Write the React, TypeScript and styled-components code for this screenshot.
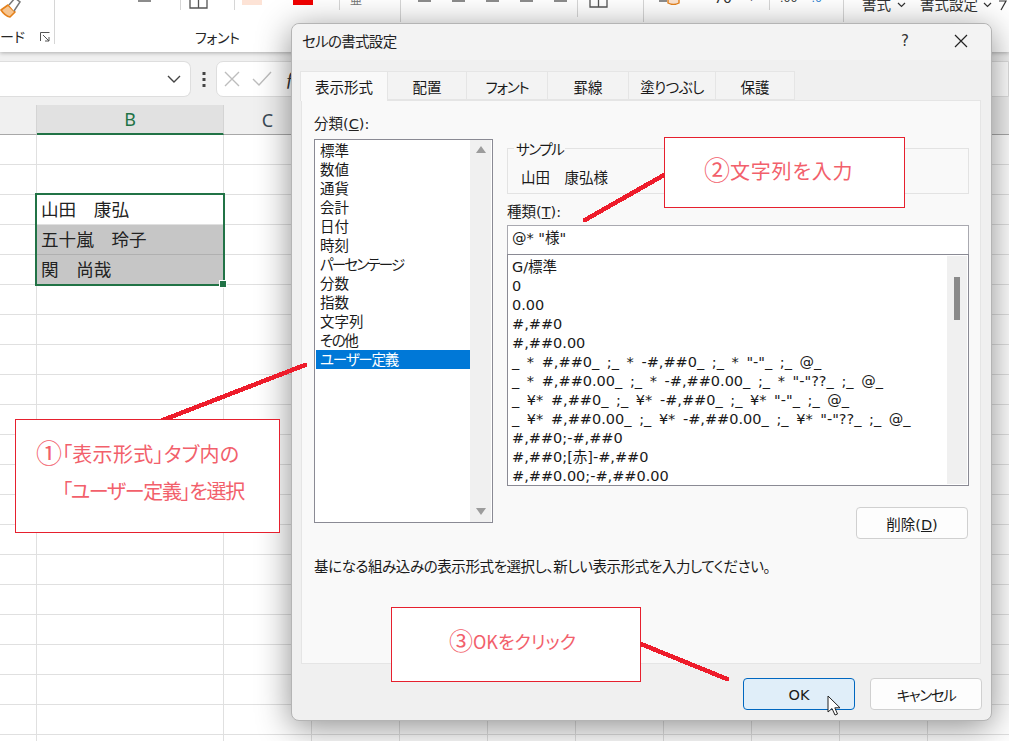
import React from "react";
import styled, { createGlobalStyle } from "styled-components";

const Global = createGlobalStyle`
  html, body { margin: 0; padding: 0; background: #fff; }
  body { font-family: "DejaVu Sans", "Noto Sans CJK JP", sans-serif; font-size: 14.5px; color: #1a1a1a; font-feature-settings: "palt"; }
  * { box-sizing: border-box; }
`;

const Page = styled.div`
  position: relative; width: 1009px; height: 741px; overflow: hidden; background: #fff;
`;

/* ---------- ribbon ---------- */
const Ribbon = styled.header`
  position: relative; z-index: 2; height: 52px; background: #fff;
  box-shadow: 0 1px 4px rgba(0,0,0,.28);
`;
const Strip = styled.div`display: flex; height: 30px; overflow: hidden;`;
const Slot = styled.div<{ $w: number; $h: number; $pad?: number; $gap?: number; $last?: boolean }>`
  flex: none; display: flex; align-items: flex-start; overflow: hidden;
  width: ${p => p.$w}px; height: ${p => p.$h}px;
  padding-left: ${p => p.$pad ?? 0}px; gap: ${p => p.$gap ?? 0}px;
  border-right: ${p => (p.$last ? "0" : "1px solid #d6d6d6")};
`;
const Dash = styled.i<{ $w?: number }>`display: block; flex: none; width: ${p => p.$w ?? 13}px; height: 2px; background: #8c8c8c;`;
const Swatch = styled.i<{ $c: string; $ml: number }>`
  display: block; flex: none; width: 20px; height: 5px; background: ${p => p.$c}; margin-left: ${p => p.$ml}px;
`;
const Clipped = styled.span<{ $top: number; $size: number; $c?: string; $ml?: number }>`
  flex: none; line-height: 20px; margin-top: ${p => p.$top}px; font-size: ${p => p.$size}px;
  color: ${p => p.$c ?? "#333"}; margin-left: ${p => p.$ml ?? 0}px;
`;
const LabelRow = styled.div`display: flex; height: 14px; font-size: 14px; line-height: 16px; color: #262626;`;
const ClipboardLabel = styled.div`
  flex: none; width: 55px; display: flex; justify-content: space-between; align-items: center;
  padding-right: 4px; border-right: 1px solid #d6d6d6; overflow: visible; white-space: nowrap;
`;
const FontLabel = styled.div`margin-left: 140px; white-space: nowrap; width: 60px; letter-spacing: -.3px;`;

/* ---------- formula bar ---------- */
const FormulaBar = styled.div`
  display: flex; align-items: center; height: 53px; padding-top: 1px; background: #f0f0f0;
`;
const NameBox = styled.div`
  width: 191px; height: 36px; background: #fff; border: 1px solid #dedede; border-left: 0;
  border-radius: 0 7px 7px 0; display: flex; align-items: center; justify-content: flex-end; padding-right: 9px;
`;
const DotsWrap = styled.div`width: 25px; display: flex; justify-content: center;`;
const FormulaBox = styled.div`
  flex: 1; height: 36px; background: #fff; border: 1px solid #dedede; border-radius: 7px 0 0 7px;
  display: flex; align-items: center; padding-left: 7px; gap: 12px;
`;
const Fx = styled.span`font: italic 20px "Liberation Serif", serif; color: #333; margin-left: 1px;`;

/* ---------- sheet ---------- */
const Columns = "37px 187px repeat(10, 88px)";
const HeaderRow = styled.div`
  display: grid; grid-template-columns: ${Columns}; height: 30px; background: #f0f0f0;
`;
const ColHead = styled.div<{ $active?: boolean }>`
  display: flex; align-items: center; justify-content: center; font-family: "Noto Sans", sans-serif; font-size: 18px;
  border-right: 1px solid #d4d4d4;
  background: ${p => (p.$active ? "#e1e1e1" : "transparent")};
  color: ${p => (p.$active ? "#217346" : "#3a4a55")};
  border-bottom: ${p => (p.$active ? "2px solid #217346" : "1px solid #a8a8a8")};
`;
const SheetGrid = styled.div`
  position: relative; display: grid; grid-template-columns: ${Columns}; grid-auto-rows: 30px;
`;
const Cell = styled.div<{ $fill?: boolean }>`
  border-right: 1px solid #e0e0e0; border-bottom: 1px solid #e0e0e0;
  background: ${p => (p.$fill ? "#c6c6c6" : "#fff")};
  border-color: ${p => (p.$fill ? "#b0b0b0" : "#e0e0e0")};
  font-family: "Noto Sans CJK JP", sans-serif;
  font-size: 17.6px; line-height: 27px; padding-left: 4px; white-space: pre; color: #222;
  font-feature-settings: normal;
`;
const Selection = styled.div`
  position: absolute; left: 35px; top: 58px; width: 190px; height: 93px; border: 2px solid #217346;
  pointer-events: none;
  &::after {
    content: ""; position: absolute; right: -3px; bottom: -3px; width: 6px; height: 6px;
    background: #217346; outline: 1px solid #fff;
  }
`;

/* ---------- dialog ---------- */
const Dialog = styled.section`
  position: absolute; z-index: 3; left: 291px; top: 23px; width: 701px; height: 698px;
  display: flex; flex-direction: column; background: #f0f0f0;
  border: 1px solid #b4b4b4; border-radius: 8px;
  box-shadow: 0 6px 34px rgba(0,0,0,.45);
`;
const TitleBar = styled.div`
  flex: none; height: 36px; display: flex; align-items: center; padding: 0 0 3px 10px;
  background: #f3f3f3; border-radius: 8px 8px 0 0; font-size: 14.5px; color: #222;
`;
const TitleText = styled.div`flex: 1; letter-spacing: -.7px;`;
const HelpMark = styled.span`width: 53px; font-size: 15px; color: #333;`;
const CloseWrap = styled.div`width: 37px; display: flex;`;
const TabRow = styled.div`flex: none; display: flex; margin: 11px 0 0 8px; height: 29px; position: relative; z-index: 1;`;
const Tab = styled.div<{ $w: number; $active?: boolean; $ls?: number }>`
  width: ${p => p.$w}px; height: ${p => (p.$active ? 30 : 29)}px; display: flex; align-items: center; justify-content: center;
  font-size: 14.5px; color: #1a1a1a; padding-top: ${p => (p.$active ? 0 : 1)}px; letter-spacing: ${p => p.$ls ?? 0}px;
  background: ${p => (p.$active ? "#f9f9f9" : "#f3f3f3")};
  border: 1px solid #e5e5e5; border-left-width: ${p => (p.$active ? 1 : 0)}px;
  border-bottom: ${p => (p.$active ? "0" : "1px solid #e5e5e5")};
`;
const Panel = styled.div`
  flex: none; height: 564px; margin: 0 10px 0 9px; padding: 14px 0 0 12px;
  background: #f9f9f9; border: 1px solid #e5e5e5;
`;
const Columns2 = styled.div`display: flex; gap: 14px;`;
const LeftCol = styled.div`flex: none; width: 179px;`;
const RightCol = styled.div`flex: none; width: 462px; padding-top: 33px; display: flex; flex-direction: column;`;
const FieldLabel = styled.div<{ $mt?: number }>`
  height: 18px; line-height: 18px; font-size: 14.5px; color: #222; white-space: nowrap; margin-top: ${p => p.$mt ?? 0}px;
`;
const ListBox = styled.div<{ $h: number }>`
  display: flex; height: ${p => p.$h}px; background: #fff; border: 1px solid #8a8a94; margin-top: 6px;
`;
const Rows = styled.div`flex: 1; padding: 1px 0 0 1px; overflow: hidden;`;
const Row = styled.div<{ $sel?: boolean; $ls?: number }>`
  height: 19px; line-height: 21px; padding-left: 4px; font-size: 14.5px; white-space: pre; letter-spacing: ${p => p.$ls ?? 0}px;
  background: ${p => (p.$sel ? "#0078d7" : "transparent")};
  color: ${p => (p.$sel ? "#fff" : "#1a1a1a")};
`;
const FormatRow = styled.div`height: 19px; line-height: 21px; font-size: 14.5px; white-space: pre; word-spacing: 3px;`;
const Track = styled.div`
  flex: none; width: 21px; margin: 0 1px 0 0; background: #f0f0f0; display: flex; flex-direction: column;
  justify-content: space-between; align-items: center; padding: 6px 0 7px;
`;
const Arrow = styled.i<{ $down?: boolean }>`
  display: block; width: 0; height: 0; border-left: 5px solid transparent; border-right: 5px solid transparent;
  ${p => (p.$down ? "border-top: 7px solid #9c9c9c;" : "border-bottom: 7px solid #9c9c9c;")}
`;
const SampleGroup = styled.div`
  position: relative; height: 46px; border: 1px solid #e3e3e3; padding: 19px 0 0 13px; font-size: 14.5px; line-height: 20px; white-space: pre;
`;
const Legend = styled.span`
  position: absolute; left: 6px; top: -8px; padding: 0 2px; background: #f9f9f9; line-height: 18px; font-size: 14.5px; letter-spacing: -1.4px;
`;
const FormatInput = styled.div`
  height: 30px; margin-top: 4px; background: #fff; border: 1px solid #a9a9b0; padding-left: 4px; line-height: 25px; font-size: 14.5px; white-space: pre;
`;
const FormatList = styled.div`
  display: flex; height: 232px; margin-top: -1px; background: #fff; border: 1px solid #8a8a94;
`;
const FormatRows = styled.div`flex: 1; padding: 2px 0 0 4px; overflow: hidden;`;
const FormatTrack = styled.div`
  flex: none; width: 20px; margin: 1px 1px 1px 0; background: #f0f0f0; display: flex; justify-content: center; padding-top: 21px;
`;
const Thumb = styled.i`display: block; width: 6px; height: 43px; background: #8a8a8a;`;
const DeleteRow = styled.div`display: flex; justify-content: flex-end; margin-top: 21px; padding-right: 1px;`;
const Btn = styled.button<{ $primary?: boolean; $ls?: number }>`
  position: relative; width: 112px; height: 32px; border-radius: 4px; font: inherit; font-size: 14.5px; color: #1a1a1a; padding: 1px 0 0;
  font-feature-settings: "palt"; letter-spacing: ${p => p.$ls ?? 0}px;
  background: ${p => (p.$primary ? "#e0eef9" : "#fdfdfd")};
  border: 1px solid ${p => (p.$primary ? "#0067c0" : "#d0d0d0")};
`;
const Hint = styled.div`margin-top: 19px; height: 18px; line-height: 18px; font-size: 14.5px; white-space: nowrap; letter-spacing: -.42px;`;
const Footer = styled.div`flex: 1; display: flex; justify-content: flex-end; gap: 15px; padding: 14px 9px 0 0;`;
const Pointer = styled.svg`position: absolute; left: 83px; top: 16px;`;

/* ---------- annotations ---------- */
const Overlay = styled.svg`position: absolute; z-index: 4; left: 0; top: 0; pointer-events: none;`;
const Callout = styled.aside<{ $x: number; $y: number; $w: number; $h: number; $pl: number; $pt: number; $size: number; $ls?: number }>`
  position: absolute; z-index: 5; left: ${p => p.$x}px; top: ${p => p.$y}px; width: ${p => p.$w}px; height: ${p => p.$h}px;
  padding: ${p => p.$pt}px 0 0 ${p => p.$pl}px; background: #fff; border: 1px solid #e6202e;
  font-family: "Noto Sans CJK JP", sans-serif; letter-spacing: ${p => p.$ls ?? 0}px;
  color: #f2606b; font-size: ${p => p.$size}px; line-height: 37px; white-space: pre;
`;
const CalloutLine = styled.div<{ $indent?: number; $ls?: number }>`
  padding-left: ${p => p.$indent ?? 0}px; letter-spacing: ${p => p.$ls ?? 0}px;
`;
const Mark = styled.span<{ $size: number }>`
  font-size: ${p => p.$size}px; line-height: 1; vertical-align: -1px; letter-spacing: 0;
`;

const cats: [string, number][] = [["標準",0],["数値",0],["通貨",0],["会計",0],["日付",0],["時刻",0],["パーセンテージ",-1.8],["分数",0],["指数",0],["文字列",0],["その他",-1.4],["ユーザー定義",-1.2]];
const formats = [
  "G/標準","0","0.00","#,##0","#,##0.00",
  '_ * #,##0_ ;_ * -#,##0_ ;_ * "-"_ ;_ @_',
  '_ * #,##0.00_ ;_ * -#,##0.00_ ;_ * "-"??_ ;_ @_',
  '_ ¥* #,##0_ ;_ ¥* -#,##0_ ;_ ¥* "-"_ ;_ @_',
  '_ ¥* #,##0.00_ ;_ ¥* -#,##0.00_ ;_ ¥* "-"??_ ;_ @_',
  "#,##0;-#,##0","#,##0;[赤]-#,##0","#,##0.00;-#,##0.00",
];
const tabs: [string, number, number][] = [["表示形式",88,0],["配置",79,0],["フォント",81,-1.2],["罫線",81,0],["塗りつぶし",87,-.6],["保護",79,0]];
const cellText: Record<number,string> = { 2: "山田　康弘", 3: "五十嵐　玲子", 4: "関　尚哉" };
const colLabels = ["", "B", "C", "", "", "", "", "", "", "", "", ""];

export default function App() {
  return (
    <Page>
      <Global />
      <Ribbon>
        <Strip>
          <Slot $w={55} $h={30}>
            <svg width="22" height="20" viewBox="0 0 22 20" style={{ flex: "none" }}>
              <path d="M1 10 L8 5 L15 12 L10 17 Q5 16 1 10Z" fill="#f6c591" stroke="#e5811a" strokeWidth="1.6" strokeLinejoin="round" />
              <path d="M9 5 L15 -2 L20 2 L14 11" fill="#fff" stroke="#777" strokeWidth="1.5" />
            </svg>
          </Slot>
          <Slot $w={126} $h={10} $pad={83}><Dash /></Slot>
          <Slot $w={54} $h={10} $pad={8}>
            <svg width="19" height="9" viewBox="0 0 19 9"><path d="M1 0V8H18V0M9.5 0V8" fill="none" stroke="#555" strokeWidth="1.3" /></svg>
          </Slot>
          <Slot $w={105} $h={10}><Swatch $c="#fde3d6" $ml={7} /><Swatch $c="#f00000" $ml={31} /></Slot>
          <Slot $w={61} $h={22} $pad={10}><Clipped $top={-9} $size={12} $c="#777">亜</Clipped></Slot>
          <Slot $w={177} $h={17} $pad={17} $gap={21}><Dash /><Dash /><Dash /><Dash /><Dash /></Slot>
          <Slot $w={66} $h={22} $pad={11}>
            <svg width="19" height="9" viewBox="0 0 19 9"><path d="M1 0V7H18V0M9.5 0V7" fill="none" stroke="#555" strokeWidth="1.3" /></svg>
          </Slot>
          <Slot $w={126} $h={10} $pad={15}>
            <Dash $w={8} />
            <svg width="13" height="5" viewBox="0 0 13 5" style={{ flex: "none" }}><path d="M1 0V3Q6.5 6 12 3V0" fill="#fbe3cf" stroke="#e5811a" strokeWidth="1.4" /></svg>
            <Clipped $top={-12} $size={14} $ml={34}>70</Clipped>
            <Clipped $top={-12} $size={13} $ml={18}>›</Clipped>
          </Slot>
          <Slot $w={74} $h={22} $pad={10}>
            <Clipped $top={-11} $size={11}>.00</Clipped>
            <Clipped $top={-11} $size={11} $ml={14} $c="#2a7fd0">.0</Clipped>
          </Slot>
          <Slot $w={170} $h={22} $pad={18} $last>
            <Clipped $top={-5} $size={14.5}>書式</Clipped>
            <svg width="9" height="6" viewBox="0 0 9 6" style={{ flex: "none", margin: "2px 0 0 6px" }}><path d="M1 1L4.5 4.5L8 1" fill="none" stroke="#333" strokeWidth="1.2" /></svg>
            <Clipped $top={-5} $size={14.5} $ml={14}>書式設定</Clipped>
            <svg width="9" height="6" viewBox="0 0 9 6" style={{ flex: "none", margin: "2px 0 0 5px" }}><path d="M1 1L4.5 4.5L8 1" fill="none" stroke="#333" strokeWidth="1.2" /></svg>
            <svg width="9" height="12" viewBox="0 0 9 12" style={{ flex: "none", marginLeft: 6 }}><path d="M1 1H8L3 10" fill="none" stroke="#333" strokeWidth="1.2" /></svg>
          </Slot>
        </Strip>
        <LabelRow>
          <ClipboardLabel>
            <span>ード</span>
            <svg width="10" height="10" viewBox="0 0 10 10"><path d="M.5 9V.5H9.5M3 3L9 9M5 9H9V5" fill="none" stroke="#555" strokeWidth="1" /></svg>
          </ClipboardLabel>
          <FontLabel>フォント</FontLabel>
        </LabelRow>
      </Ribbon>

      <FormulaBar>
        <NameBox>
          <svg width="14" height="8" viewBox="0 0 14 8"><path d="M1 1L7 7L13 1" fill="none" stroke="#444" strokeWidth="1.4" /></svg>
        </NameBox>
        <DotsWrap>
          <svg width="4" height="15" viewBox="0 0 4 15"><path d="M.5 0h3v3h-3zM.5 6h3v3h-3zM.5 12h3v3h-3z" fill="#444" /></svg>
        </DotsWrap>
        <FormulaBox>
          <svg width="16" height="16" viewBox="0 0 16 16"><path d="M1 1L15 15M15 1L1 15" stroke="#bdbdbd" strokeWidth="1.4" /></svg>
          <svg width="20" height="16" viewBox="0 0 20 16"><path d="M1 8L7 14L19 1" fill="none" stroke="#bdbdbd" strokeWidth="1.4" /></svg>
          <Fx>ƒ</Fx>
        </FormulaBox>
      </FormulaBar>

      <HeaderRow>
        {colLabels.map((l, i) => <ColHead key={i} $active={i === 1}>{l}</ColHead>)}
      </HeaderRow>
      <SheetGrid>
        {Array.from({ length: 21 }).flatMap((_, r) =>
          colLabels.map((_, c) => (
            <Cell key={`${r}-${c}`} $fill={c === 1 && (r === 3 || r === 4)}>
              {c === 1 ? cellText[r] ?? "" : ""}
            </Cell>
          ))
        )}
        <Selection />
      </SheetGrid>

      <Dialog>
        <TitleBar>
          <TitleText>セルの書式設定</TitleText>
          <HelpMark>?</HelpMark>
          <CloseWrap>
            <svg width="14" height="14" viewBox="0 0 14 14"><path d="M1 1L13 13M13 1L1 13" stroke="#222" strokeWidth="1.2" /></svg>
          </CloseWrap>
        </TitleBar>
        <TabRow>
          {tabs.map(([t, w, ls], i) => <Tab key={t} $w={w} $ls={ls} $active={i === 0}>{t}</Tab>)}
        </TabRow>
        <Panel>
          <Columns2>
            <LeftCol>
              <FieldLabel>分類(<u>C</u>):</FieldLabel>
              <ListBox $h={384}>
                <Rows>
                  {cats.map(([c, ls], i) => <Row key={c} $ls={ls} $sel={i === 11}>{c}</Row>)}
                </Rows>
                <Track><Arrow /><Arrow $down /></Track>
              </ListBox>
            </LeftCol>
            <RightCol>
              <SampleGroup>
                <Legend>サンプル</Legend>
                山田　康弘様
              </SampleGroup>
              <FieldLabel $mt={9}>種類(<u>T</u>):</FieldLabel>
              <FormatInput>@* "様"</FormatInput>
              <FormatList>
                <FormatRows>
                  {formats.map(f => <FormatRow key={f}>{f}</FormatRow>)}
                </FormatRows>
                <FormatTrack><Thumb /></FormatTrack>
              </FormatList>
              <DeleteRow><Btn>削除(<u>D</u>)</Btn></DeleteRow>
            </RightCol>
          </Columns2>
          <Hint>基になる組み込みの表示形式を選択し、新しい表示形式を入力してください。</Hint>
        </Panel>
        <Footer>
          <Btn $primary>
            OK
            <Pointer width="14" height="22" viewBox="0 0 14 22">
              <path d="M1 1V17L5 13.5L8 20L10.5 19L7.8 12.8H13Z" fill="#fff" stroke="#222" strokeWidth="1" strokeLinejoin="round" />
            </Pointer>
          </Btn>
          <Btn $ls={-1.4}>キャンセル</Btn>
        </Footer>
      </Dialog>

      <Overlay width="1009" height="741" viewBox="0 0 1009 741">
        <g stroke="#ee1c2b" strokeWidth="4.5" strokeLinecap="round" shapeRendering="crispEdges">
          <path d="M163 420L305 365" />
          <path d="M585 220L664 175" />
          <path d="M641 644L727 679" />
        </g>
      </Overlay>

      <Callout $x={15} $y={419} $w={265} $h={114} $pl={20} $pt={15} $size={20}>
        <CalloutLine $ls={.3}><Mark $size={26}>①</Mark>「表示形式」タブ内の</CalloutLine>
        <CalloutLine $indent={26} $ls={-1.3}>「ユーザー定義」を選択</CalloutLine>
      </Callout>
      <Callout $x={664} $y={137} $w={241} $h={71} $pl={39} $pt={14} $size={20} $ls={.8}><Mark $size={26}>②</Mark>文字列を入力</Callout>
      <Callout $x={391} $y={607} $w={250} $h={75} $pl={57} $pt={15} $size={18}><Mark $size={24}>③</Mark>OKをクリック</Callout>
    </Page>
  );
}
